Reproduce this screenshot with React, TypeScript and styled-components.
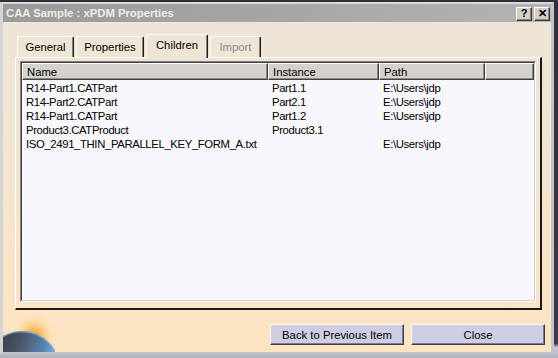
import React from "react";
import styled, { createGlobalStyle } from "styled-components";

const GlobalStyle = createGlobalStyle`
  html, body { margin: 0; padding: 0; }
  body {
    font-family: "Liberation Sans", Arial, sans-serif;
    font-size: 11px;
    color: #000;
    background: #3a3a4a;
  }
  * { box-sizing: border-box; }
`;

const Desktop = styled.div`
  width: 558px;
  height: 358px;
  padding: 2px 4px 4px 0;
  background: linear-gradient(to bottom, #2e2e3c 0%, #3a3a4a 96%, #c8c8d0 97%, #b0b4c0 100%);
`;

const Dialog = styled.div`
  width: 554px;
  height: 352px;
  display: flex;
  flex-direction: column;
  border-style: solid;
  border-width: 2px 3px 2px 3px;
  border-color: #dadada #c4c4c4 #c4c4c4 #d4d4d4;
  background: linear-gradient(to bottom, #eee5d7 0%, #f2e5d2 45%, #fbe4c6 80%, #fde4c2 100%);
`;

const TitleBar = styled.div`
  height: 18px;
  flex: none;
  display: flex;
  align-items: center;
  justify-content: space-between;
  padding-left: 3px;
  padding-right: 1px;
  background: linear-gradient(to right, #9a9a9a 0%, #a6a6a6 50%, #b4b4b4 100%);
`;

const Title = styled.span`
  font-weight: bold;
  font-size: 11.3px;
  color: #ededed;
  white-space: nowrap;
`;

const CaptionButtons = styled.div`
  display: flex;
  gap: 2px;
  margin-top: 1px;
`;

const CaptionButton = styled.div`
  width: 16px;
  height: 14px;
  display: flex;
  align-items: center;
  justify-content: center;
  background: #d4d0c8;
  border-style: solid;
  border-width: 1px;
  border-color: #ffffff #404040 #404040 #ffffff;
  box-shadow: inset -1px -1px 0 #808080;
  font-weight: bold;
  font-size: 11px;
  line-height: 1;
  color: #000;
`;

const Client = styled.div`
  flex: 1;
  display: flex;
  flex-direction: column;
  padding-top: 12px;
`;

const TabRow = styled.div`
  height: 23px;
  flex: none;
  display: flex;
  align-items: flex-end;
  gap: 2px;
  margin-left: 14px;
`;

const Tab = styled.div<{ $w: number; $selected?: boolean; $disabled?: boolean }>`
  width: ${(p) => p.$w}px;
  height: ${(p) => (p.$selected ? 24 : 21)}px;
  margin-bottom: ${(p) => (p.$selected ? -1 : 0)}px;
  position: relative;
  z-index: ${(p) => (p.$selected ? 2 : 0)};
  display: flex;
  align-items: center;
  justify-content: center;
  padding-bottom: ${(p) => (p.$selected ? 3 : 0)}px;
  border-style: solid;
  border-width: 1px 1px 0 1px;
  border-color: #ffffff #1e1e1e #ffffff #ffffff;
  border-radius: 2px 2px 0 0;
  box-shadow: inset -1px 0 0 #808080;
  background: ${(p) => (p.$selected ? "#efe5d6" : "transparent")};
  color: ${(p) => (p.$disabled ? "#8a8a8a" : "#000")};
  font-size: 11.3px;
  white-space: nowrap;
`;

const Panel = styled.div`
  height: 253px;
  flex: none;
  margin: 0 9px 0 12px;
  display: flex;
  padding: 3px 4px 6px 4px;
  border-style: solid;
  border-width: 1px 2px 2px 1px;
  border-color: #ffffff #1a1a1a #1a1a1a #ffffff;
  position: relative;
  z-index: 1;
`;

const ListOuter = styled.div`
  flex: 1;
  display: flex;
  border-style: solid;
  border-width: 1px;
  border-color: #808080 #ffffff #ffffff #808080;
`;

const ListInner = styled.div`
  flex: 1;
  display: flex;
  flex-direction: column;
  border-style: solid;
  border-width: 1px;
  border-color: #404040 #d4d0c8 #d4d0c8 #404040;
  background: #f7f7fc;
`;

const Columns = "246px 111px 106px 1fr";

const HeaderRow = styled.div`
  display: grid;
  grid-template-columns: ${Columns};
  height: 17px;
  flex: none;
  background: #d5d2cc;
`;

const HeaderCell = styled.div`
  display: flex;
  align-items: center;
  padding-left: 4px;
  border-style: solid;
  border-width: 1px;
  border-color: #ffffff #404040 #404040 #ffffff;
  box-shadow: inset -1px -1px 0 #8a8a8a;
  white-space: nowrap;
  overflow: hidden;
  font-size: 11.3px;
`;

const Rows = styled.div`
  display: flex;
  flex-direction: column;
  padding-top: 1px;
`;

const Row = styled.div`
  display: grid;
  grid-template-columns: ${Columns};
  height: 14px;
  align-items: center;
`;

const Cell = styled.div`
  padding-left: 4px;
  white-space: nowrap;
  overflow: visible;
  font-size: 11.3px;
  letter-spacing: -0.35px;
`;

const Footer = styled.div`
  flex: 1;
  display: flex;
  justify-content: space-between;
  align-items: flex-start;
`;

const GlobeArt = styled.svg`
  align-self: flex-end;
  display: block;
`;

const Buttons = styled.div`
  display: flex;
  gap: 7px;
  margin-top: 14px;
  margin-right: 6px;
`;

const PushButton = styled.div`
  width: 134px;
  height: 21px;
  display: flex;
  align-items: center;
  justify-content: center;
  background: #cfcde3;
  border-style: solid;
  border-width: 1px;
  border-color: #ffffff #3c3c4c #3c3c4c #ffffff;
  box-shadow: inset -1px -1px 0 #7a7a90;
  font-size: 11.3px;
  color: #000;
`;

const rows = [
  ["R14-Part1.CATPart", "Part1.1", "E:\\Users\\jdp"],
  ["R14-Part2.CATPart", "Part2.1", "E:\\Users\\jdp"],
  ["R14-Part1.CATPart", "Part1.2", "E:\\Users\\jdp"],
  ["Product3.CATProduct", "Product3.1", ""],
  ["ISO_2491_THIN_PARALLEL_KEY_FORM_A.txt", "", "E:\\Users\\jdp"],
];

function Globe() {
  return (
    <GlobeArt width="52" height="38" viewBox="0 0 52 38">
      <defs>
        <radialGradient id="glow" cx="31" cy="22" r="24" gradientUnits="userSpaceOnUse">
          <stop offset="0" stopColor="#f39436" stopOpacity="1" />
          <stop offset="0.3" stopColor="#f7b458" stopOpacity="0.85" />
          <stop offset="0.65" stopColor="#fcd690" stopOpacity="0.5" />
          <stop offset="1" stopColor="#fde4c2" stopOpacity="0" />
        </radialGradient>
        <linearGradient id="planet" x1="0" y1="0" x2="1" y2="0.35">
          <stop offset="0" stopColor="#2c3038" />
          <stop offset="0.45" stopColor="#4a5264" />
          <stop offset="0.78" stopColor="#5886b6" />
          <stop offset="1" stopColor="#90c8f0" />
        </linearGradient>
      </defs>
      <rect x="0" y="0" width="52" height="38" fill="url(#glow)" />
      <circle cx="19" cy="55" r="38" fill="url(#planet)" />
      <circle cx="19" cy="55" r="37.3" fill="none" stroke="#80b8e2" strokeWidth="1.2" strokeOpacity="0.75" />
    </GlobeArt>
  );
}

export default function App() {
  return (
    <>
      <GlobalStyle />
      <Desktop>
        <Dialog>
          <TitleBar>
            <Title>CAA Sample : xPDM Properties</Title>
            <CaptionButtons>
              <CaptionButton>?</CaptionButton>
              <CaptionButton>✕</CaptionButton>
            </CaptionButtons>
          </TitleBar>
          <Client>
            <TabRow>
              <Tab $w={57}>General</Tab>
              <Tab $w={68}>Properties</Tab>
              <Tab $w={62} $selected>
                Children
              </Tab>
              <Tab $w={51} $disabled>
                Import
              </Tab>
            </TabRow>
            <Panel>
              <ListOuter>
                <ListInner>
                  <HeaderRow>
                    <HeaderCell>Name</HeaderCell>
                    <HeaderCell>Instance</HeaderCell>
                    <HeaderCell>Path</HeaderCell>
                    <HeaderCell />
                  </HeaderRow>
                  <Rows>
                    {rows.map((r, i) => (
                      <Row key={i}>
                        <Cell>{r[0]}</Cell>
                        <Cell>{r[1]}</Cell>
                        <Cell>{r[2]}</Cell>
                        <Cell />
                      </Row>
                    ))}
                  </Rows>
                </ListInner>
              </ListOuter>
            </Panel>
            <Footer>
              <Globe />
              <Buttons>
                <PushButton>Back to Previous Item</PushButton>
                <PushButton>Close</PushButton>
              </Buttons>
            </Footer>
          </Client>
        </Dialog>
      </Desktop>
    </>
  );
}
